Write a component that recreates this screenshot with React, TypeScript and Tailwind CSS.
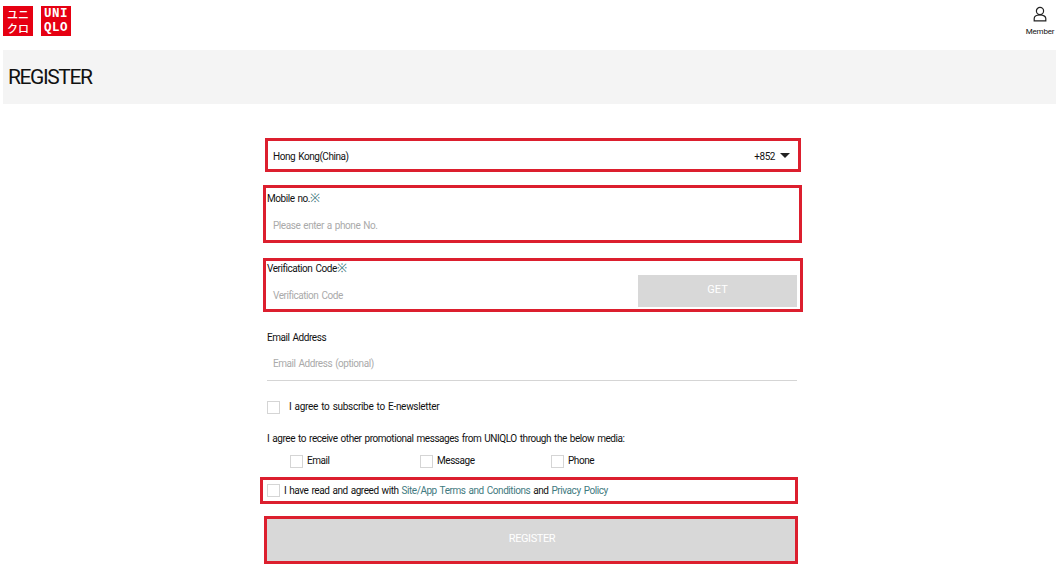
function Box({ label }: { label: string }) {
    return (
        <label className="flex items-center gap-[4px]">
            <span className="w-[13px] h-[13px] border border-[#d5d5d5] bg-white" />
            <span>{label}</span>
        </label>
    );
}

export default function App() {
    return (
        <div className="w-[1056px] h-[565px] overflow-hidden bg-white text-[#111] text-[10px] leading-[14px] tracking-[-0.45px] [word-spacing:1px] font-['Roboto','Liberation_Sans',sans-serif]">
            <header className="h-[50px] flex justify-between">
                <div className="flex gap-[8px] pl-[3px] pt-[6px] tracking-normal [word-spacing:0]">
                    <div className="w-[30px] h-[30px] bg-[#e60012] text-white font-medium text-[11px] leading-[14px] font-['Noto_Sans_CJK_JP',sans-serif] flex items-center justify-center text-center">
                        <span>ユニ<br />クロ</span>
                    </div>
                    <div className="w-[30px] h-[30px] bg-[#e60012] text-white font-bold text-[12.5px] leading-[14px] tracking-[0.5px] font-['Liberation_Mono',monospace] flex flex-col items-center justify-center">
                        <span>UNI</span>
                        <span>QLO</span>
                    </div>
                </div>
                <div className="w-[30px] mr-[1px] pt-[6px] flex flex-col items-center text-[8px] leading-[10px] tracking-[-0.2px]">
                    <svg width="16" height="16" viewBox="0 0 16 16" fill="none" stroke="#222" strokeWidth="1.2">
                        <circle cx="8" cy="5" r="3.6" />
                        <path d="M2.2 14.8V12.6C2.2 10.4 4.8 9 8 9s5.8 1.4 5.8 3.6v2.2Z" />
                    </svg>
                    <span className="mt-[5px]">Member</span>
                </div>
            </header>

            <div className="ml-[3px] h-[54px] bg-[#f4f4f4] flex items-center pl-[5px] text-[21px] text-[#111] tracking-[-1.4px]">
                REGISTER
            </div>

            <main className="pt-[34px]">
                <div className="ml-[265px] w-[536px] h-[34px] border-[3px] border-[#dc1f2e] flex items-center justify-between pl-[5px] pr-[8px]">
                    <span className="pt-[3px]">Hong Kong(China)</span>
                    <span className="flex items-center gap-[5px]">
                        <span className="pt-[3px]">+852</span>
                        <span className="w-0 h-0 border-x-[5px] border-x-transparent border-t-[5px] border-t-[#222]" />
                    </span>
                </div>

                <div className="ml-[263px] mt-[13px] w-[539px] h-[58px] border-[3px] border-[#dc1f2e] pl-[1px] pt-[3px]">
                    <div>Mobile no.<span className="text-[12px] leading-[14px] text-[#3f7a80]">※</span></div>
                    <div className="mt-[13px] pl-[6px] text-[#aaa]">Please enter a phone No.</div>
                </div>

                <div className="ml-[263px] mt-[15px] w-[540px] h-[54px] border-[3px] border-[#dc1f2e] pl-[1px] flex justify-between">
                    <div>
                        <div>Verification Code<span className="text-[12px] leading-[14px] text-[#3f7a80]">※</span></div>
                        <div className="mt-[13px] pl-[6px] text-[#aaa]">Verification Code</div>
                    </div>
                    <button className="mt-[14px] mr-[3px] w-[159px] h-[32px] pb-[2px] bg-[#d8d8d8] text-white text-[11px] tracking-normal">GET</button>
                </div>

                <div className="ml-[267px] w-[530px] mt-[19px]">
                    <div>Email Address</div>
                    <div className="mt-[12px] pl-[6px] pb-[9px] text-[#aaa] border-b border-[#d5d5d5]">Email Address (optional)</div>

                    <div className="mt-[19px] flex items-center">
                        <span className="w-[13px] h-[13px] border border-[#d5d5d5]" />
                        <span className="ml-[9px] tracking-[-0.3px]">I agree to subscribe to E-newsletter</span>
                    </div>

                    <div className="mt-[18px]">I agree to receive other promotional messages from UNIQLO through the below media:</div>

                    <div className="mt-[8px] pl-[23px] grid grid-cols-[130px_131px_100px]">
                        <Box label="Email" />
                        <Box label="Message" />
                        <Box label="Phone" />
                    </div>
                </div>

                <div className="ml-[260px] mt-[9px] w-[538px] h-[27px] border-[3px] border-[#dc1f2e] pl-[4px] flex items-center">
                    <span className="w-[13px] h-[13px] border border-[#d5d5d5]" />
                    <span className="ml-[4px] pt-[1px]">
                        I have read and agreed with <span className="text-[#3f7a80]">Site/App Terms and Conditions</span> and <span className="text-[#3f7a80]">Privacy Policy</span>
                    </span>
                </div>

                <button className="block ml-[264px] mt-[12px] w-[534px] h-[48px] pb-[2px] pl-[2px] border-[3px] border-[#dc1f2e] bg-[#d8d8d8] text-white text-[11px] tracking-[-0.4px]">REGISTER</button>
            </main>
        </div>
    );
}
